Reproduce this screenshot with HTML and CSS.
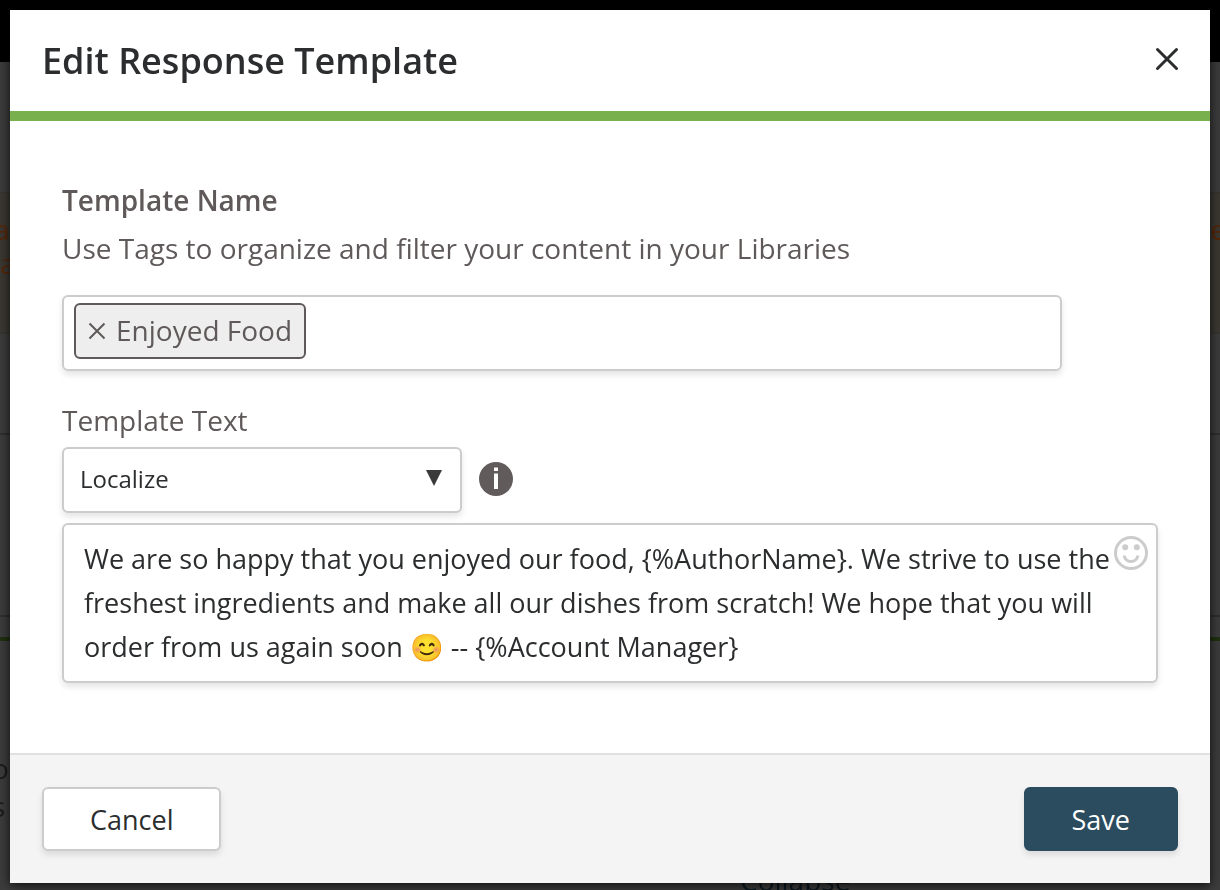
FILE: index.html
```html
<!DOCTYPE html>
<html lang="en">
<head>
<meta charset="utf-8">
<meta name="viewport" content="width=device-width, initial-scale=1">
<title>Edit Response Template</title>
<link rel="stylesheet" href="styles.css">
</head>
<body>
<div class="page" aria-hidden="true">
  <div class="page-top"></div>
  <div class="page-gap"></div>
  <div class="page-notice">
    <div class="page-row"><span>a</span><span>e</span></div>
    <div class="page-row page-row-inner"><span>a</span></div>
  </div>
  <div class="page-block"></div>
  <div class="page-block page-block-tall"></div>
  <div class="page-tab"></div>
  <div class="page-list">
    <span>o</span>
    <span>s</span>
  </div>
  <div class="page-collapse">Collapse</div>
</div>
<main class="stage">
  <form class="modal" role="dialog" aria-labelledby="modal-title">
    <header class="modal-header">
      <h1 class="modal-title" id="modal-title">Edit Response Template</h1>
      <button class="icon-button close-button" type="button" aria-label="Close">
        <svg width="24" height="24" viewBox="0 0 24 24" fill="none" stroke="#2b2d2e" stroke-width="3" stroke-linecap="round"><path d="M2.500 2.500 21.500 21.500M21.500 2.500 2.500 21.500"/></svg>
      </button>
    </header>
    <div class="modal-body">
      <label class="field-label field-label-strong" for="tags">Template Name</label>
      <p class="field-help">Use Tags to organize and filter your content in your Libraries</p>
      <div class="tag-box">
        <span class="tag">
          <button class="icon-button" type="button" aria-label="Remove Enjoyed Food">
            <svg width="18" height="18" viewBox="0 0 18 18" fill="none" stroke="#5f5959" stroke-width="2"><path d="M1.500 1.500 16.500 16.500M16.500 1.500 1.500 16.500"/></svg>
          </button>
          <span class="tag-text">Enjoyed Food</span>
        </span>
        <input class="tag-input" id="tags" type="text">
      </div>
      <label class="field-label" for="text">Template Text</label>
      <div class="tools">
        <div class="select-wrap">
          <select class="select" aria-label="Insert field"><option>Localize</option></select>
          <svg class="select-arrow" width="18" height="18" viewBox="0 0 18 18"><path d="M1 1H17L9 17Z" fill="#3a3a3a"/></svg>
        </div>
        <button class="icon-button info-button" type="button" aria-label="Information">
          <svg width="34" height="34" viewBox="0 0 34 34"><circle cx="17" cy="17" r="17" fill="#625b5b"/><path d="M15 5.500h4v3.500h-4zM15 11.500h4v15.500h-4z" fill="#fff"/></svg>
        </button>
      </div>
      <div class="message">
        <textarea class="message-text" id="text" rows="3">We are so happy that you enjoyed our food, {%AuthorName}. We strive to use the freshest ingredients and make all our dishes from scratch! We hope that you will order from us again soon 😊 -- {%Account Manager}</textarea>
        <button class="icon-button emoji-button" type="button" aria-label="Insert emoji">
          <svg width="34" height="34" viewBox="0 0 34 34"><circle cx="17" cy="17" r="15.500" fill="none" stroke="#ccc" stroke-width="3"/><circle cx="11.200" cy="11.300" r="3" fill="#ccc"/><circle cx="22.800" cy="11.300" r="3" fill="#ccc"/><path d="M10 19.500Q11.500 25.500 17 25.500T24 19.500" fill="none" stroke="#ccc" stroke-width="3"/></svg>
        </button>
      </div>
    </div>
    <footer class="modal-footer">
      <button class="button" type="button">Cancel</button>
      <button class="button button-primary" type="submit">Save</button>
    </footer>
  </form>
</main>
</body>
</html>
```
FILE: styles.css
```css
* { box-sizing: border-box; }

body {
  margin: 0;
  background: #3c3c3c;
  color: #2b2d2e;
  font-family: "Open Sans", "Noto Sans", sans-serif;
  font-size: 28px;
}

button, input, select, textarea { font: inherit; color: inherit; }

.page {
  position: fixed;
  inset: 0;
  overflow: hidden;
  display: flex;
  flex-direction: column;
  line-height: 34px;
  color: #1b1b1b;
}
.page > * { flex: none; }
.page-top { height: 62px; background: #000; }
.page-gap { height: 130px; }
.page-notice {
  height: 142px;
  padding-top: 18px;
  background: #3b3832;
  border-top: 2px solid #373530;
  border-bottom: 2px solid #373530;
  color: #552709;
}
.page-row { display: flex; justify-content: space-between; margin: 0 -6px; }
.page-row-inner { margin: 0; }
.page-block { height: 101px; border-bottom: 2px solid #2e2e2e; }
.page-block-tall { height: 182px; }
.page-tab { height: 24px; border-bottom: 4px solid #1f3010; }
.page-list { display: flex; flex-direction: column; margin-left: -8px; padding-top: 108px; line-height: 38px; }
.page-collapse { margin-top: 38px; padding-left: 740px; color: #0d1820; }

.stage { position: relative; padding: 10px 10px 7px; }

.modal {
  display: flex;
  flex-direction: column;
  background: #fff;
  box-shadow: 0 2px 10px rgba(0, 0, 0, 0.8);
}
.modal-header {
  display: flex;
  align-items: center;
  justify-content: space-between;
  padding: 25px 31px 25px 32px;
  border-bottom: 10px solid #77b04d;
}
.modal-title { margin: 0; font-size: 36px; font-weight: 600; line-height: 51px; }
.icon-button {
  display: flex;
  flex: none;
  padding: 0;
  border: 0;
  background: none;
  cursor: pointer;
}
.close-button { padding-bottom: 3px; }
.info-button { padding-bottom: 2px; }

.modal-body { padding: 60px 52px 70px; }
.field-label { display: block; line-height: 38px; color: #5f5959; }
.field-label-strong { font-weight: 600; }
.field-help { margin: 10px 0 28px; line-height: 38px; color: #5f5959; }

.tag-box {
  display: flex;
  align-items: flex-start;
  max-width: 1000px;
  margin-bottom: 30px;
  padding: 6px 10px 10px;
  border: 2px solid #ccc;
  border-radius: 6px;
  box-shadow: 0 4px 6px rgba(0, 0, 0, 0.1);
}
.tag {
  display: flex;
  align-items: center;
  gap: 10px;
  height: 56px;
  padding: 0 12px;
  border: 2px solid #5f5959;
  border-radius: 6px;
  background: #eee;
  color: #5f5959;
}
.tag-text { padding-bottom: 2px; }
.tag-input { flex: 1; min-width: 0; height: 56px; border: 0; outline: 0; background: none; }

.tools { display: flex; align-items: center; gap: 17px; margin: 8px 0 10px; }
.select-wrap { position: relative; width: 400px; }
.select {
  display: block;
  width: 100%;
  height: 66px;
  padding: 0 16px 4px;
  border: 2px solid #ccc;
  border-radius: 6px;
  background: #fff;
  box-shadow: 0 4px 6px rgba(0, 0, 0, 0.1);
  font-size: 24px;
  appearance: none;
}
.select-arrow { position: absolute; top: 22px; right: 19px; pointer-events: none; }

.message { position: relative; }
.message-text {
  display: block;
  width: 100%;
  height: 160px;
  padding: 12px 44px 12px 20px;
  border: 2px solid #ccc;
  border-radius: 6px;
  background: #fff;
  box-shadow: 0 4px 6px rgba(0, 0, 0, 0.1);
  font-size: 27px;
  line-height: 44px;
  overflow: hidden;
  resize: none;
}
.emoji-button { position: absolute; top: 13px; right: 10px; }

.modal-footer {
  display: flex;
  justify-content: space-between;
  padding: 32px;
  border-top: 2px solid #e0e0e0;
  background: #f4f4f4;
}
.button {
  height: 64px;
  padding: 0 46px;
  border: 2px solid #ccc;
  border-radius: 6px;
  background: #fff;
  box-shadow: 0 4px 6px rgba(0, 0, 0, 0.1);
  font-size: 27px;
}
.button-primary { border-color: #2b4c5e; background: #2b4c5e; color: #fff; }
```
